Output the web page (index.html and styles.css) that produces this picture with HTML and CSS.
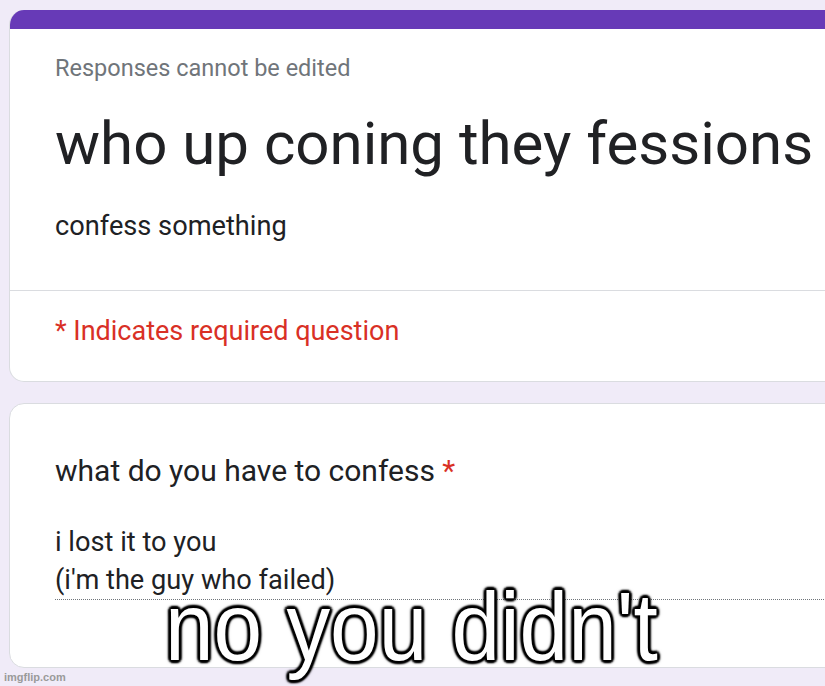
FILE: index.html
```html
<!DOCTYPE html>
<html lang="en">
<head>
<meta charset="utf-8">
<title>who up coning they fessions</title>
<link rel="stylesheet" href="styles.css">
</head>
<body>
<div class="page">
  <section class="card header-card">
    <div class="accent"></div>
    <div class="header-main">
      <div class="notice">Responses cannot be edited</div>
      <h1 class="title">who up coning they fessions</h1>
      <div class="desc">confess something</div>
    </div>
    <div class="required-note">* Indicates required question</div>
  </section>
  <section class="card question-card">
    <div class="question">what do you have to confess <span class="star">*</span></div>
    <div class="answer">i lost it to you<br>(i'm the guy who failed)</div>
  </section>
</div>
<div class="caption">no you didn't</div>
<div class="watermark">imgflip.com</div>
</body>
</html>
```
FILE: styles.css
```css
html, body {
  margin: 0;
  padding: 0;
}
body {
  width: 825px;
  height: 686px;
  overflow: hidden;
  background: #f0ebf8;
  font-family: Roboto, "Liberation Sans", Arial, sans-serif;
  color: #202124;
  position: relative;
}
.page {
  padding: 10px 0 0 9px;
  display: flex;
  flex-direction: column;
  gap: 21px;
}
.card {
  width: 900px;
  background: #fff;
  border: 1px solid #dadce0;
  border-radius: 15px;
  box-sizing: border-box;
}
.header-card {
  border-top: none;
  overflow: hidden;
}
.accent {
  height: 19px;
  background: #673ab7;
}
.header-main {
  padding: 25px 0 48px 45px;
  border-bottom: 1px solid #dadce0;
}
.notice {
  font-size: 23.5px;
  line-height: 28px;
  color: #70757a;
}
.title {
  margin: 26px 0 0;
  font-size: 60px;
  font-weight: 400;
  line-height: 72px;
  letter-spacing: 0;
}
.desc {
  margin-top: 30px;
  font-size: 27.2px;
  line-height: 32px;
}
.required-note {
  padding: 24px 0 34px 45px;
  font-size: 27px;
  line-height: 32px;
  color: #d93025;
}
.question-card {
  padding: 48px 0 67px 45px;
}
.question {
  font-size: 30px;
  line-height: 38px;
}
.star {
  color: #d93025;
}
.answer {
  margin-top: 33px;
  padding-bottom: 0;
  font-size: 27.2px;
  line-height: 38px;
  border-bottom: 1px dotted #70757a;
}
.caption {
  position: absolute;
  left: 165px;
  top: 572px;
  font-family: "Liberation Sans", Arial, sans-serif;
  font-size: 96px;
  line-height: 110px;
  color: #fff;
  white-space: nowrap;
  transform: scaleX(0.91);
  transform-origin: left top;
  text-shadow:
    -2px -2px 2px #000, 2px -2px 2px #000, -2px 2px 2px #000, 2px 2px 2px #000,
    0 -3px 2px #000, 0 3px 2px #000, -3px 0 2px #000, 3px 0 2px #000,
    0 0 4px #000, 0 0 6px rgba(0, 0, 0, 0.8);
}
.watermark {
  position: absolute;
  left: 4px;
  top: 670px;
  font-family: "Liberation Sans", Arial, sans-serif;
  font-size: 11px;
  font-weight: bold;
  line-height: 14px;
  color: #9a9a9a;
}
```
